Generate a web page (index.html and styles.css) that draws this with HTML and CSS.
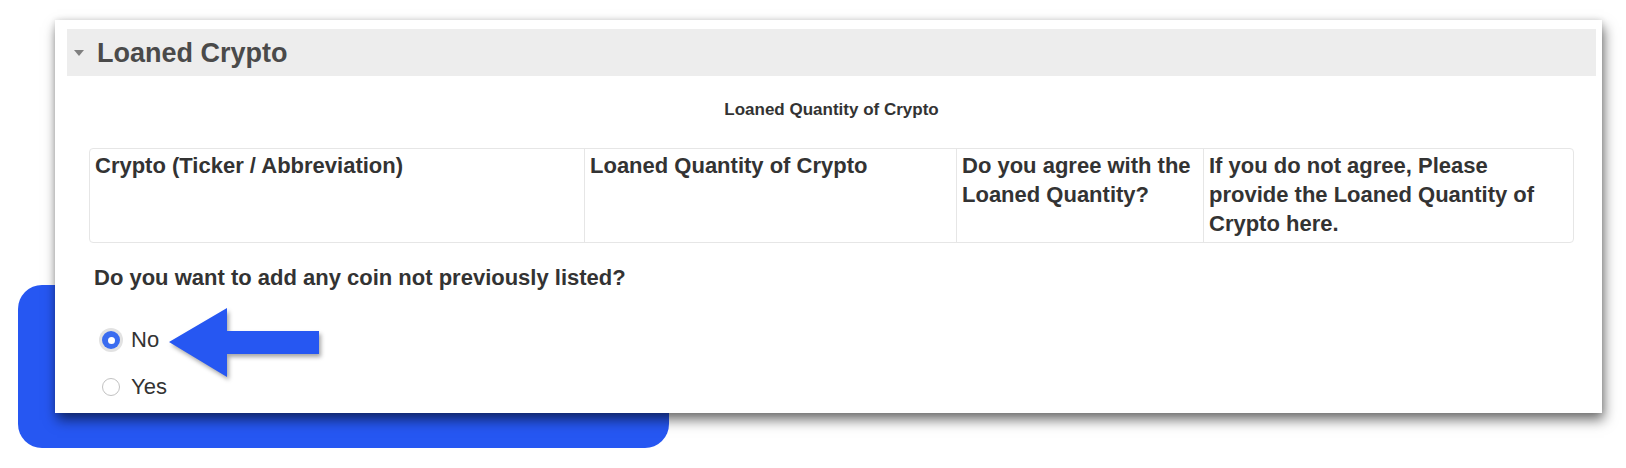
FILE: index.html
```html
<!DOCTYPE html>
<html>
<head>
<meta charset="utf-8">
<link rel="stylesheet" href="styles.css">
</head>
<body>
<div class="stage">
  <div class="blue-box"></div>
  <div class="card">
    <div class="band">
      <span class="caret"></span>
      <h2 class="band-title">Loaned Crypto</h2>
    </div>
    <div class="content">
      <div class="subtitle">Loaned Quantity of Crypto</div>
      <div class="grid-table">
        <div class="cell">Crypto (Ticker / Abbreviation)</div>
        <div class="cell">Loaned Quantity of Crypto</div>
        <div class="cell">Do you agree with the Loaned Quantity?</div>
        <div class="cell">If you do not agree, Please provide the Loaned Quantity of Crypto here.</div>
      </div>
      <div class="question">Do you want to add any coin not previously listed?</div>
      <div class="options">
        <label class="option"><span class="radio checked"></span><span class="opt-text">No</span></label>
        <label class="option"><span class="radio"></span><span class="opt-text">Yes</span></label>
      </div>
    </div>
  </div>
  <svg class="arrow" width="170" height="90" viewBox="0 0 170 90">
    <polygon points="9,42 67,8 67,31 159,31 159,54 67,54 67,77" fill="#2657f2"/>
  </svg>
</div>
</body>
</html>
```

FILE: styles.css
```css
html, body {
  margin: 0;
  padding: 0;
  background: #ffffff;
}
body {
  font-family: "Liberation Sans", Arial, Helvetica, sans-serif;
  width: 1626px;
  height: 468px;
  overflow: hidden;
}
.stage {
  position: relative;
  padding: 20px 0 0 55px;
}
.blue-box {
  position: absolute;
  left: 18px;
  top: 285px;
  width: 651px;
  height: 163px;
  border-radius: 24px;
  background: #2657f2;
}
.card {
  position: relative;
  width: 1547px;
  height: 393px;
  background: #ffffff;
  box-shadow: 2px 7px 12px rgba(0, 0, 0, 0.55), 0 0 6px rgba(0, 0, 0, 0.12);
  display: flex;
  flex-direction: column;
}
.band {
  margin: 9px 6px 0 12px;
  height: 47px;
  background: #ededed;
  display: flex;
  align-items: center;
}
.caret {
  width: 0;
  height: 0;
  margin-left: 7px;
  margin-right: 13px;
  border-left: 5px solid transparent;
  border-right: 5px solid transparent;
  border-top: 6px solid #808080;
}
.band-title {
  margin: 0;
  font-size: 27px;
  font-weight: bold;
  color: #4a4a4a;
  line-height: 32px;
  padding-top: 1px;
}
.content {
  padding: 0 28px 0 34px;
  display: flex;
  flex-direction: column;
}
.subtitle {
  margin-top: 24px;
  text-align: center;
  font-size: 17px;
  line-height: 20px;
  font-weight: bold;
  color: #333333;
}
.grid-table {
  margin-top: 28px;
  display: grid;
  grid-template-columns: 494px 372px 247px 370px;
  border: 1px solid #e6e6e6;
  border-radius: 4px;
}
.cell {
  padding: 2px 5px 4px 5px;
  font-size: 22px;
  line-height: 29px;
  font-weight: bold;
  color: #333333;
}
.cell + .cell {
  border-left: 1px solid #e6e6e6;
}
.question {
  margin: 22px 0 0 5px;
  font-size: 22px;
  line-height: 26px;
  font-weight: bold;
  color: #333333;
}
.options {
  margin-top: 34px;
  display: flex;
  flex-direction: column;
  gap: 17px;
  padding-left: 13px;
}
.option {
  height: 30px;
  display: flex;
  align-items: center;
}
.radio {
  box-sizing: border-box;
  width: 18px;
  height: 18px;
  border-radius: 50%;
  border: 1px solid #c2c2c2;
  background: #ffffff;
  display: flex;
  align-items: center;
  justify-content: center;
}
.radio.checked {
  border: none;
  background: #3a6cf0;
  box-shadow: 0 0 0 3px #e2e2e2;
}
.radio.checked::after {
  content: "";
  width: 7px;
  height: 7px;
  border-radius: 50%;
  background: #ffffff;
}
.opt-text {
  margin-left: 11px;
  font-size: 22px;
  line-height: 26px;
  color: #333333;
}
.arrow {
  position: absolute;
  left: 160px;
  top: 300px;
  filter: drop-shadow(2px 3px 2px rgba(0, 0, 0, 0.35));
}
```
